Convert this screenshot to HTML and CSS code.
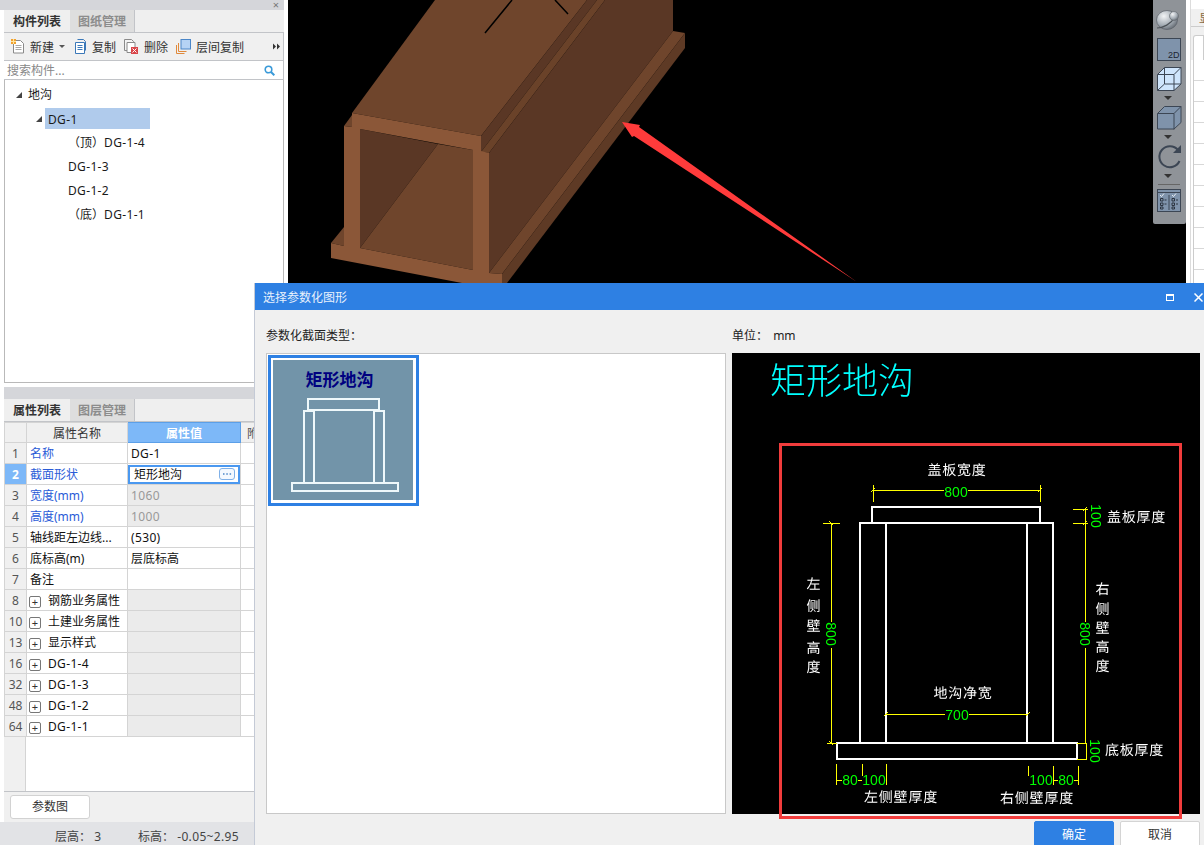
FILE: index.html
```html
<!DOCTYPE html>
<html lang="zh-CN">
<head>
<meta charset="utf-8">
<title>选择参数化图形</title>
<link rel="stylesheet" href="styles.css">
</head>
<body>
<div class="app">
  <aside class="side">
    <div class="bar bar-top"><span class="bar-x">×</span></div>
    <div class="tabs">
      <span class="tab active">构件列表</span><span class="tab">图纸管理</span>
    </div>
    <div class="toolbar">
      <svg class="ic ic-new" width="14" height="15" viewBox="0 0 14 15"><path d="M2.5 1.5h7l3 3v9.500h-10z" fill="#fff" stroke="#8a8a8a"/><path d="M4.500 6.500h6M4.500 8.500h6M4.500 10.500h6" stroke="#a8a8a8"/><rect x="0" y="0" width="5" height="5" fill="#f0a030"/><path d="M0 2.500h5M2.500 0v5" stroke="#ffe6a0"/></svg>
      <span class="tool-t">新建</span><span class="caret"></span>
      <svg class="ic ic-copy" width="14" height="15" viewBox="0 0 14 15"><path d="M2.500 3.500h9v11h-9z" fill="#fff" stroke="#3b78b8"/><path d="M4.500 .5h6l2 2v9" fill="none" stroke="#3b78b8"/><path d="M4.500 6.500h5M4.500 8.500h5M4.500 10.500h5" stroke="#3b78b8"/></svg>
      <span class="tool-t">复制</span>
      <svg class="ic ic-del" width="15" height="15" viewBox="0 0 15 15"><path d="M.5.5h7l2 2v9h-9z" fill="#f4f4f4" stroke="#8a8a8a"/><path d="M3 3.500h8v10H3z" fill="#fff" stroke="#8a8a8a"/><rect x="7" y="8" width="7" height="7" fill="#d9464a"/><path d="M8.500 9.500l4 4M12.500 9.500l-4 4" stroke="#fff"/></svg>
      <span class="tool-t">删除</span>
      <svg class="ic ic-layer" width="15" height="15" viewBox="0 0 15 15"><path d="M.5 6v8.500h8" fill="none" stroke="#e08a3c"/><path d="M2.500 4v8.500h8" fill="none" stroke="#e08a3c"/><rect x="5" y=".5" width="9.500" height="9.500" fill="#b5d3f5" stroke="#4a86c8"/></svg>
      <span class="tool-t">层间复制</span>
      <svg class="more" width="7" height="7" viewBox="0 0 7 7"><path d="M0 .5l3 3-3 3zM4 .5l3 3-3 3z" fill="#333"/></svg>
    </div>
    <div class="search">
      <span class="search-t">搜索构件...</span>
      <svg width="11" height="11" viewBox="0 0 11 11"><circle cx="4.500" cy="4.500" r="3.300" fill="none" stroke="#3a9ad9" stroke-width="1.600"/><path d="M7 7l3.300 3.300" stroke="#3a9ad9" stroke-width="2"/></svg>
    </div>
    <div class="tree">
      <div class="node lv0"><span class="tri"></span><span>地沟</span></div>
      <div class="node lv1"><span class="tri"></span><span class="sel lat">DG-1</span></div>
      <div class="node lv2">（顶）<span class="lat">DG-1-4</span></div>
      <div class="node lv2 lat">DG-1-3</div>
      <div class="node lv2 lat">DG-1-2</div>
      <div class="node lv2">（底）<span class="lat">DG-1-1</span></div>
    </div>
    <div class="gap"></div>
    <div class="bar"></div>
    <div class="tabs">
      <span class="tab active">属性列表</span><span class="tab">图层管理</span>
    </div>
    <div class="grid-wrap">
      <table class="props">
        <colgroup><col class="c-no"><col class="c-name"><col class="c-val"><col class="c-x"></colgroup>
        <tr class="head"><th></th><th>属性名称</th><th class="on">属性值</th><th class="hx">附加</th></tr>
        <tr><td class="no">1</td><td class="blue">名称</td><td class="lat">DG-1</td><td></td></tr>
        <tr><td class="no on">2</td><td class="blue">截面形状</td><td class="edit"><div class="edit-in"><span>矩形地沟</span><svg width="16" height="12" viewBox="0 0 16 12"><rect x=".5" y=".5" width="15" height="11" rx="2.500" fill="#f4f9ff" stroke="#7fb0e8"/><path d="M4 6h1.500M7.300 6h1.500M10.600 6h1.500" stroke="#4a86c8" stroke-width="1.500"/></svg></div></td><td></td></tr>
        <tr><td class="no">3</td><td class="blue">宽度(mm)</td><td class="dis lat">1060</td><td></td></tr>
        <tr><td class="no">4</td><td class="blue">高度(mm)</td><td class="dis lat">1000</td><td></td></tr>
        <tr><td class="no">5</td><td>轴线距左边线...</td><td class="lat">(530)</td><td></td></tr>
        <tr><td class="no">6</td><td>底标高(m)</td><td>层底标高</td><td></td></tr>
        <tr><td class="no">7</td><td>备注</td><td></td><td></td></tr>
        <tr><td class="no">8</td><td><span class="plus">+</span>钢筋业务属性</td><td class="dis"></td><td></td></tr>
        <tr><td class="no">10</td><td><span class="plus">+</span>土建业务属性</td><td class="dis"></td><td></td></tr>
        <tr><td class="no">13</td><td><span class="plus">+</span>显示样式</td><td class="dis"></td><td></td></tr>
        <tr><td class="no">16</td><td class="lat"><span class="plus">+</span>DG-1-4</td><td class="dis"></td><td></td></tr>
        <tr><td class="no">32</td><td class="lat"><span class="plus">+</span>DG-1-3</td><td class="dis"></td><td></td></tr>
        <tr><td class="no">48</td><td class="lat"><span class="plus">+</span>DG-1-2</td><td class="dis"></td><td></td></tr>
        <tr><td class="no">64</td><td class="lat"><span class="plus">+</span>DG-1-1</td><td class="dis"></td><td></td></tr>
      </table>
      <div class="filler"><div class="filler-no"></div></div>
    </div>
    <div class="foot"><button class="btn-param">参数图</button></div>
    <div class="status"><span class="st1">层高<span class="colon">：</span> 3</span><span class="st2">标高<span class="colon">：</span> <span class="lat">-0.05~2.95</span></span></div>
  </aside>

  <main class="view">
    <svg class="scene" width="898" height="845" viewBox="288 0 898 845">
      <path fill="#6f452c" d="M435 0H587L481 136 352 113z"/>
      <path fill="#5a3725" d="M587 0H597L481 152V136z"/>
      <path fill="#6a4229" d="M597 0H605L489 153 481 152z"/>
      <path fill="#5a3725" d="M605 0H673V31L489 273V153z"/>
      <path fill="#6f452c" d="M673 31L685 33 502 274 489 273z"/>
      <path fill="#5e3a25" d="M685 33V48L507 283H502V274z"/>
      <path fill="#5a3725" d="M360 129L438 144 360 248z"/>
      <path fill="#6f452c" d="M438 144L473 150V270L360 248z"/>
      <path fill="#6f452c" d="M344 126L352 115V127z"/>
      <path fill="#6f452c" d="M331 243L344 227V246z"/>
      <path fill="#8b5738" d="M352 113L481 136V151L489 153V273L502 274V283H462L331 258V243L344 246V126L352 127zM360 129V248L473 270V150z" fill-rule="evenodd"/>
      <path stroke="#000" stroke-width="1.500" fill="none" d="M485 33L512 0M555 0L568 14"/>
      <path fill="#ff3b3b" d="M622 122L640 125 639 127 857 282 634 136 632 137z"/>
    </svg>
    <div class="tool3d">
      <svg width="33" height="224" viewBox="0 0 33 224">
        <defs>
          <radialGradient id="ball" cx=".35" cy=".3" r=".8"><stop offset="0" stop-color="#f2f4f6"/><stop offset=".6" stop-color="#a3abb3"/><stop offset="1" stop-color="#5a6068"/></radialGradient>
        </defs>
        <ellipse cx="14" cy="20" rx="10.500" ry="9.500" fill="url(#ball)" stroke="#5a6068" stroke-width=".7"/>
        <path d="M4 28c6 0 14-4 18-11" fill="none" stroke="#4c5258" stroke-width="1.200"/>
        <circle cx="21" cy="16" r="4.500" fill="url(#ball)" stroke="#6a7076" stroke-width=".7"/>
        <rect x="4.500" y="38.500" width="23" height="22" fill="#7f93ab" stroke="#3c4654"/>
        <text class="t2d" x="15" y="58">2D</text>
        <path d="M4.500 74.500l7-7h16.500v16.500l-7 6.500h-16.500z" fill="#cfe5fc" stroke="#3c4654"/>
        <path d="M4.500 74.500h16.500v16M21 74.500l7-7M11.500 67.500v16.500h16.500M11.500 84l-7 6.500" fill="none" stroke="#3c4654"/>
        <path d="M11 96h8l-4 4z" fill="#333"/>
        <path d="M4.500 113.500l7-7h16.500v16l-7 6.500h-16.500z" fill="#7f93ab" stroke="#3c4654"/>
        <path d="M4.500 113.500h16.500v16M21 113.500l7-7" fill="none" stroke="#3c4654"/>
        <path d="M11 135h8l-4 4z" fill="#333"/>
        <path d="M25 150a10.500 10.500 0 1 0 1.500 11" fill="none" stroke="#3c4654" stroke-width="2"/>
        <path d="M20 153h8v-8z" fill="#3c4654"/>
        <path d="M11 174h8l-4 4z" fill="#333"/>
        <path d="M5 184.500h22" stroke="#666"/>
        <rect x="4.500" y="189.500" width="23" height="22" fill="#7f93ab" stroke="#3c4654"/>
        <path d="M4.500 192.500h23M16 195v15" stroke="#3c4654"/>
        <path d="M7 195l1.500 1.500 2.500-3M19 195l1.500 1.500 2.500-3" fill="none" stroke="#e8eef4"/>
        <path d="M7.500 198.500h2.500v2.500h-2.500zM7.500 203h2.500v2.500h-2.500zM7.500 207h2.500v2h-2.500zM19 198.500h2.500v2.500h-2.500zM19 203h2.500v2.500h-2.500zM19 207h2.500v2h-2.500zM11.500 200h2M11.500 204h2M23 200h2M23 204h2" fill="none" stroke="#2c3440"/>
      </svg>
    </div>
  </main>

  <aside class="right">
    <div class="r-head"><span>显</span></div>
    <div class="r-tab"><div class="r-tab-in"></div></div>
    <div class="r-grid"></div>
  </aside>
</div>

<section class="dialog">
  <header class="d-title">
    <span class="d-name">选择参数化图形</span>
    <span class="d-ctrl">
      <span class="d-max"></span>
      <svg class="d-close" width="9" height="9" viewBox="0 0 9 9"><path d="M.5.5l8 8M8.500.5l-8 8" stroke="#fff" stroke-width="1.500"/></svg>
    </span>
  </header>
  <div class="d-labels"><span class="lbl-type">参数化截面类型<span class="colon">：</span></span><span>单位<span class="colon unit-c">：</span> mm</span></div>
  <div class="d-body">
    <div class="d-list">
      <div class="thumb">
        <svg width="140" height="140" viewBox="273 360 140 140">
          <rect x="273" y="360" width="140" height="140" fill="#7294a9"/>
          <text class="th-title" x="339.500" y="386">矩形地沟</text>
          <path class="th-line" d="M308 399h71v11h-71zM304 411h10v72h-10zM374 411h10v72h-10zM314 410h60M292 483h106v8h-106z"/>
        </svg>
      </div>
    </div>
    <div class="d-preview">
      <svg class="cad" width="468" height="461" viewBox="732 353 468 461">
        <text class="cad-title" x="770" y="394">矩形地沟</text>
        <path class="w" d="M872 522V507H1040V522M860 743V523H1053V743M886 523V743M1027 523V743M837 743H1077V759H837z"/>
        <path class="y" d="M873 485V502M1040 485V502M873 490H944M968 490H1040M871 492L875 488M1038 492L1042 488"/>
        <path class="y" d="M1073 509H1088M1073 523H1088M1085 508V622M1085 648V743M1083 525L1087 521M1083 511L1087 507"/>
        <path class="y" d="M823 523H840M831 523V622M831 648V743M827 743H837M829 521L833 525M829 741L833 745"/>
        <path class="y" d="M1077 743H1087M1077 759H1087M1086 743V759"/>
        <path class="y" d="M885 714H945M969 714H1028M884 716L888 712M1026 716L1030 712"/>
        <path class="y" d="M836 764V785M862 764V776M886 764V785M1028 766V776M1053 766V785M1078 766V785M836 780H842M858 780H862M1053 780H1058M1074 780H1078"/>
        <text class="g m" x="956" y="497">800</text>
        <text class="g m" x="957" y="720">700</text>
        <text class="g m" x="850" y="785">80</text>
        <text class="g m" x="874" y="785">100</text>
        <text class="g m" x="1041" y="785">100</text>
        <text class="g m" x="1066" y="785">80</text>
        <text class="g m" transform="rotate(90 1096 516)" x="1096" y="521">100</text>
        <text class="g m" transform="rotate(90 1095 751)" x="1095" y="756">100</text>
        <text class="g m" transform="rotate(90 831 634)" x="831" y="639">800</text>
        <text class="g m" transform="rotate(90 1085 634)" x="1085" y="639">800</text>
        <text class="l m" x="957" y="475">盖板宽度</text>
        <text class="l m" x="1136.500" y="522">盖板厚度</text>
        <text class="l m" x="963" y="698">地沟净宽</text>
        <text class="l m" x="1134.500" y="755">底板厚度</text>
        <text class="l m" x="901" y="802">左侧壁厚度</text>
        <text class="l m" x="1037" y="803">右侧壁厚度</text>
        <text class="l m" x="814" y="589">左</text><text class="l m" x="814" y="611">侧</text><text class="l m" x="814" y="631">壁</text><text class="l m" x="814" y="653">高</text><text class="l m" x="814" y="672">度</text>
        <text class="l m" x="1103" y="594">右</text><text class="l m" x="1103" y="614">侧</text><text class="l m" x="1103" y="633">壁</text><text class="l m" x="1103" y="652">高</text><text class="l m" x="1103" y="671">度</text>
        <rect class="redbox" x="780.500" y="444.500" width="400" height="373"/>
      </svg>
    </div>
  </div>
  <footer class="d-foot">
    <button class="btn primary">确定</button>
    <button class="btn">取消</button>
  </footer>
</section>
</body>
</html>
```

FILE: styles.css
```css
* { box-sizing: border-box; }
html, body { margin: 0; height: 845px; overflow: hidden; background: #fff; }
body { font: 12px/1.2 "Noto Sans", "Noto Sans CJK SC", sans-serif; color: #111; position: relative; }
.app { display: flex; height: 845px; }
.lat { letter-spacing: .35px; }
.colon { font-family: "Noto Sans CJK TC", sans-serif; }

/* left column */
.side { width: 288px; padding-left: 4px; display: flex; flex-direction: column; flex: none; }
.side > * { width: 280px; }
.bar { height: 12px; background: #d5d6da; flex: none; }
.bar-top { height: 10px; width: 284px; margin-left: -4px; position: relative; }
.bar-x { position: absolute; right: 5px; top: 0; font-size: 11px; line-height: 10px; color: #777; }
.tabs { height: 23px; flex: none; display: flex; background: #efefef; border-bottom: 1px solid #c2c4c8; }
.tab { width: 65px; text-align: center; line-height: 24px; background: #dedede; color: #8c8c8c; border-right: 1px solid #c2c4c8; font-weight: 700; }
.tab.active { width: 66px; background: #efefef; color: #333; border-right: 0; }
.toolbar { height: 27px; flex: none; display: flex; align-items: center; background: #f0f0f0; border-right: 1px solid #c2c4c8; padding-left: 7px; position: relative; }
.tool-t { color: #333; margin-left: 5px; padding-top: 3px; }
.caret { width: 0; height: 0; border: 3px solid transparent; border-top: 3px solid #555; margin: 3px 0 0 5px; }
.ic { flex: none; }
.ic-copy { margin-left: 8px; }
.ic-del { margin-left: 8px; }
.ic-layer { margin-left: 8px; }
.more { position: absolute; right: 3px; top: 10px; }
.search { height: 20px; flex: none; display: flex; align-items: center; justify-content: space-between; background: #fff; border: 1px solid #c2c4c8; border-width: 1px 1px 1px 0; padding: 0 8px 0 3px; }
.search-t { color: #888; padding-top: 2px; }
.tree { height: 303px; flex: none; background: #fff; border: 1px solid #b9b9b9; border-top: 0; padding-top: 3px; }
.node { height: 24px; display: flex; align-items: center; white-space: nowrap; color: #1a1a1a; }
.lv0 { padding-left: 11px; }
.lv1 { padding-left: 31px; }
.lv2 { padding-left: 63px; }
.tri { width: 0; height: 0; border-style: solid; border-width: 0 0 6px 6px; border-color: transparent transparent #444 transparent; margin-right: 6px; }
.lv1 .tri { margin-right: 3px; }
.sel { background: #b0cbec; width: 105px; height: 21px; line-height: 23px; padding-left: 3px; margin-top: -2px; }
.gap { height: 4px; flex: none; }
.grid-wrap { flex: 1; display: flex; flex-direction: column; min-height: 0; background: #fff; border-bottom: 1px solid #c2c4c8; }
.props { width: 280px; table-layout: fixed; border-collapse: collapse; flex: none; }
.c-no { width: 22px; } .c-name { width: 101px; } .c-val { width: 113px; } .c-x { width: 44px; }
.props tr { height: 21px; }
.props tr.head { height: 20px; }
.props td, .props th { border: 1px solid #d4d4d4; padding: 2px 0 0 3px; white-space: nowrap; overflow: hidden; font-weight: 400; background: #fff; color: #111; line-height: 14px; height: 21px; }
.props tr.head th { background: #f0f0f0; text-align: center; color: #333; padding: 2px 0 0; height: 20px; }
.props tr.head th.hx { text-align: left; padding-left: 6px; color: #555; }
.props tr.head th.on { background: #7db8f8; color: #fff; font-weight: 700; border: 1px solid #5b9fe8; }
.props td.no { background: #f0f0f0; text-align: center; color: #555; padding: 2px 0 0; }
.props td.no.on { background: #7db8f8; color: #fff; font-weight: 700; }
.props td.blue { color: #2a5bd7; }
.props td.dis { background: #ebebeb; color: #999; }
.props td.edit { padding: 0; }
.edit-in { height: 19px; border: 2px solid #4a98f0; display: flex; align-items: center; justify-content: space-between; padding: 0 3px 0 4px; background: #fff; }
.edit-in span { padding-top: 2px; }
.edit-in svg { flex: none; }
.plus { display: inline-block; width: 12px; height: 12px; border: 1px solid #777; border-radius: 2px; line-height: 9px; text-align: center; font-size: 11px; margin: 0 7px 0 -1px; vertical-align: -1px; color: #333; letter-spacing: 0; }
.filler { flex: 1; display: flex; }
.filler-no { width: 22px; background: #f0f0f0; border-right: 1px solid #d4d4d4; }
.foot { height: 30px; flex: none; background: #f0f0f0; padding: 3px 0 0 6px; }
.btn-param { width: 80px; height: 24px; background: #fff; border: 1px solid #d2d2d2; border-radius: 3px; font: inherit; color: #333; padding: 0; }
.status { height: 23px; flex: none; width: 284px; margin-left: -4px; background: #e2e3e6; display: flex; align-items: center; color: #444; padding: 6px 0 0 55px; }
.st2 { margin-left: 37px; }

/* centre 3D viewport */
.view { width: 898px; flex: none; background: #000; position: relative; overflow: hidden; }
.scene { display: block; }
.tool3d { position: absolute; right: 0; top: 0; width: 33px; height: 224px; background: #8f9398; border-radius: 0 0 2px 2px; }
.tool3d svg { display: block; }
.t2d { font: 9px "Liberation Sans", sans-serif; fill: #1c2430; }

/* right panel */
.right { flex: 1; margin-left: 4px; border-left: 1px solid #dcdcdc; background: #fff; display: flex; flex-direction: column; overflow: hidden; }
.r-head { margin-top: 9px; height: 18px; flex: none; background: #f0f0f0; border-bottom: 1px solid #ccc; padding: 3px 0 0 8px; color: #8a6a40; white-space: nowrap; }
.r-tab { height: 33px; flex: none; padding: 8px 0 0 2px; background: #f0f0f0; }
.r-tab-in { height: 25px; background: #fff; border: 1px solid #ccc; border-bottom: 0; border-radius: 3px 0 0 0; }
.r-grid { flex: 1; margin-left: 2px; border-left: 1px solid #ccc; background: repeating-linear-gradient(#fff 0 20px, #d8d8d8 20px 21px); }

/* dialog */
.dialog { position: absolute; left: 254px; top: 283px; width: 960px; height: 562px; background: #f0f0f0; border-left: 1px solid #c4cad6; display: flex; flex-direction: column; }
.d-title { height: 27px; flex: none; background: #2e80e3; color: #e8f1fc; padding: 0 0 0 8px; display: flex; align-items: center; position: relative; }
.d-name { padding-top: 3px; }
.d-ctrl { display: flex; align-items: center; position: absolute; left: 911px; top: 10px; }
.d-max { width: 8px; height: 7px; border: 1px solid #fff; border-top-width: 2px; }
.d-close { margin-left: 20px; }
.d-labels { height: 43px; flex: none; display: flex; align-items: center; padding: 9px 0 0 11px; color: #222; }
.lbl-type { width: 466px; }
.unit-c { margin-right: 2px; }
.d-body { display: flex; flex: none; height: 461px; padding-left: 11px; }
.d-list { width: 460px; height: 461px; background: #fff; border: 1px solid #c8c8c8; padding: 1px; flex: none; }
.thumb { width: 151px; height: 151px; border: 3px solid #2e80e3; padding: 2px; background: #fff; }
.thumb svg { display: block; }
.th-title { font: 700 17px "Noto Sans CJK SC", sans-serif; fill: #000080; text-anchor: middle; }
.th-line { fill: none; stroke: #eef8fb; stroke-width: 2; }
.d-preview { width: 468px; height: 461px; margin-left: 6px; background: #000; flex: none; }
.cad { display: block; overflow: visible; will-change: transform; }
.cad-title { font: 300 36px "Noto Sans CJK SC", sans-serif; fill: #00ffff; }
.w { fill: none; stroke: #fff; stroke-width: 2; }
.y { fill: none; stroke: #ffff00; stroke-width: 1; shape-rendering: crispEdges; }
.g { font: 14px "Liberation Sans", sans-serif; fill: #00ff00; }
.l { font: 14px "Noto Sans CJK SC", sans-serif; fill: #fff; letter-spacing: .8px; text-rendering: geometricPrecision; }
.m { text-anchor: middle; }
.redbox { fill: none; stroke: #f13c3c; stroke-width: 3; }
.d-foot { flex: 1; display: flex; padding: 7px 0 0 779px; gap: 6px; }
.btn { width: 80px; height: 28px; flex: none; font: inherit; background: #fff; border: 1px solid #d4d4d4; border-radius: 2px; color: #333; padding: 1px 0 0; }
.btn.primary { background: #2e80e3; border-color: #2e80e3; color: #fff; }
```
